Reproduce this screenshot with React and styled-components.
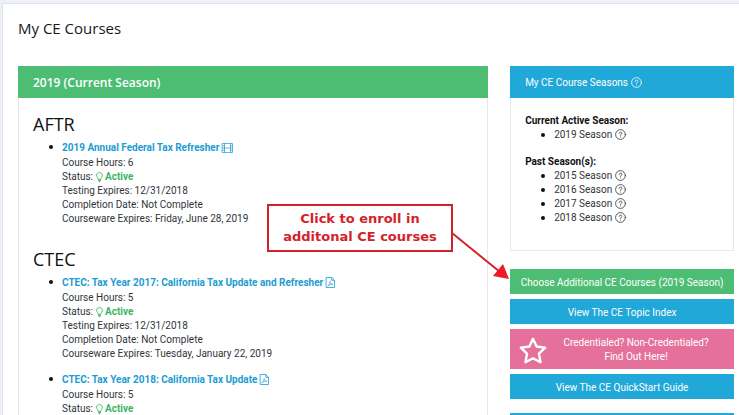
import React from 'react';
import styled, { createGlobalStyle } from 'styled-components';

const GlobalStyle = createGlobalStyle`
    * {
        box-sizing: border-box;
    }
    body {
        margin: 0;
        background: #eef0f7;
        color: #30353a;
        font-family: Roboto, "Open Sans", sans-serif;
        font-size: 10px;
        line-height: 14px;
    }
`

const Page = styled.div`
    position: relative;
    height: 100vh;
    padding: 3px 0 0 2px;
    overflow: hidden;
`

const Content = styled.main`
    min-height: 100%;
    padding: 14px 5px 0 15px;
    background: #fff;
    border-top: 1px solid #dfe3ec;
    border-left: 1px solid #dfe3ec;
`

const PageTitle = styled.h1`
    margin: 0 0 28px;
    color: #16191c;
    font-family: "Open Sans", sans-serif;
    font-size: 15px;
    font-weight: 400;
    line-height: 20px;
`

const Columns = styled.div`
    display: grid;
    grid-template-columns: 21fr 10fr;
    gap: 22px;
`

const Panel = styled.section`
    border: 1px solid #e6e8ea;
    border-top: 0;
`

const PanelHeader = styled.h2`
    display: flex;
    align-items: center;
    gap: 3px;
    height: 32px;
    margin: 0 -1px;
    padding: 2px 15px 0;
    background: ${props => props.$color};
    color: #fff;
    font-family: ${props => (props.$large ? '"Open Sans", sans-serif' : 'inherit')};
    font-size: ${props => (props.$large ? '12px' : '10px')};
    font-weight: ${props => (props.$large ? 600 : 400)};
`

const PanelBody = styled.div`
    padding: 15px 14px 25px;
`

const CourseGroup = styled.div`
    margin-bottom: 22px;
`

const GroupTitle = styled.h3`
    margin: 0 0 4px;
    color: #111;
    font-family: "Open Sans", sans-serif;
    font-size: 18px;
    font-weight: 400;
    line-height: 23px;
`

const CourseList = styled.ul`
    display: grid;
    gap: 11px;
    margin: 0;
    padding: 0 0 0 29px;
    list-style: none;
`

/* dot drawn by hand so it keeps its size next to the small text */
const dot = `
    position: relative;
    &::before {
        content: "";
        position: absolute;
        top: 5px;
        left: -13px;
        width: 4px;
        height: 4px;
        border-radius: 50%;
        background: #111;
    }
`

const Course = styled.li`
    ${dot}
`

const CourseLink = styled.a`
    display: block;
    color: #209cd2;
    font-weight: 700;
    line-height: 16px;
    text-decoration: none;
`

const Status = styled.strong`
    color: #3cb464;
`

const SeasonTitle = styled.h3`
    margin: 0;
    color: #111;
    font-size: 10px;
    font-weight: 700;
    line-height: 15px;
`

const SeasonList = styled.ul`
    margin: 0 0 12px;
    padding: 0 0 0 29px;
    list-style: none;
    &:last-child {
        margin: 0;
    }
`

const Season = styled.li`
    ${dot}
`

const HelpButton = styled.button`
    padding: 0;
    border: 0;
    background: none;
    color: inherit;
    font: inherit;
    vertical-align: top;
    cursor: pointer;
`

const Icon = styled.svg`
    width: ${props => props.$width || 11}px;
    height: ${props => props.$height || 11}px;
    overflow: visible;
    fill: none;
    stroke: currentColor;
    stroke-width: 1;
    stroke-linejoin: round;
    stroke-linecap: round;
    vertical-align: -2px;
`

const Actions = styled.nav`
    display: grid;
    gap: 5px;
    margin-top: 18px;
`

const Action = styled.a`
    display: flex;
    align-items: center;
    min-height: 25px;
    padding: 6px 9px 4px;
    background: ${props => props.$color || '#20a8d8'};
    color: #fff;
    text-align: center;
    text-decoration: none;
    &:last-child {
        margin-top: 9px;
    }
`

const FeatureAction = styled(Action)`
    min-height: 40px;
`

const ActionText = styled.span`
    flex: 1;
`

const Callout = styled.div`
    position: absolute;
    top: 204px;
    left: 267px;
    width: 186px;
    padding: 4px 0;
    background: #fff;
    border: 2px solid #d2232a;
    color: #d2232a;
    font-family: "DejaVu Sans", sans-serif;
    font-size: 13px;
    font-weight: 700;
    line-height: 18px;
    text-align: center;
`

const Arrow = styled.svg`
    position: absolute;
    top: 232px;
    left: 452px;
    width: 58px;
    height: 48px;
`

const HelpIcon = () => (
    <Icon viewBox="0 0 11 11" aria-hidden="true">
        <circle cx="5.5" cy="5.5" r="4.9" strokeWidth="0.8" />
        <path d="M4.1 4.3C4.2 2.6 7 2.7 6.9 4.3C6.8 5.3 5.5 5.3 5.5 6.4M5.5 8V8.1" strokeWidth="0.8" />
    </Icon>
)

const FilmIcon = () => (
    <Icon viewBox="0 0 11 10" $height={10} aria-hidden="true">
        <path d="M.5 .5H10.5V9.5H.5ZM2.5 .5V9.5M8.5 .5V9.5M2.5 5H8.5M.5 2.7H2.5M.5 5H2.5M.5 7.3H2.5M8.5 2.7H10.5M8.5 5H10.5M8.5 7.3H10.5" strokeWidth="0.7" />
    </Icon>
)

const PdfIcon = () => (
    <Icon viewBox="0 0 9 11" $width={9} aria-hidden="true">
        <path d="M.5 .5H5.7L8.5 3.3V10.5H.5ZM5.7 .5V3.3H8.5" strokeWidth="0.8" />
        <path d="M2 8.8C3.2 8.3 4.5 5.8 4.1 4.4C3.5 5.5 5.4 7.5 7 7.4C6 6.8 3.5 7.3 2 8.8Z" strokeWidth="0.6" />
    </Icon>
)

const BulbIcon = () => (
    <Icon viewBox="0 0 7 10" $width={7} $height={10} aria-hidden="true">
        <path d="M2.3 7C2.3 5.6 .6 5 .6 3.2C.6 -.3 6.4 -.3 6.4 3.2C6.4 5 4.7 5.6 4.7 7ZM2.4 8.4H4.6M3 9.6H4" strokeWidth="0.9" />
    </Icon>
)

const StarIcon = () => (
    <Icon viewBox="0 0 28 27" $width={28} $height={27} aria-hidden="true">
        <path d="M14 1.8L17.6 9.5L26.2 10.7L20 16.7L21.5 25.2L14 21.2L6.5 25.2L8 16.7L1.8 10.7L10.4 9.5Z" strokeWidth="2.4" />
    </Icon>
)

const groups = [
    {
        name: 'AFTR',
        courses: [
            {
                title: '2019 Annual Federal Tax Refresher',
                icon: FilmIcon,
                hours: 6,
                details: ['Testing Expires: 12/31/2018', 'Completion Date: Not Complete', 'Courseware Expires: Friday, June 28, 2019'],
            },
        ],
    },
    {
        name: 'CTEC',
        courses: [
            {
                title: 'CTEC: Tax Year 2017: California Tax Update and Refresher',
                icon: PdfIcon,
                hours: 5,
                details: ['Testing Expires: 12/31/2018', 'Completion Date: Not Complete', 'Courseware Expires: Tuesday, January 22, 2019'],
            },
            {
                title: 'CTEC: Tax Year 2018: California Tax Update',
                icon: PdfIcon,
                hours: 5,
                details: [],
            },
        ],
    },
]

const CourseItem = ({ title, icon: TypeIcon, hours, details }) => (
    <Course>
        <CourseLink href="#course">{title} <TypeIcon /></CourseLink>
        <div>Course Hours: {hours}</div>
        <div>Status: <Status><BulbIcon /> Active</Status></div>
        {details.map(line => <div key={line}>{line}</div>)}
    </Course>
)

const Seasons = ({ years }) => (
    <SeasonList>
        {years.map(year => (
            <Season key={year}>
                {year} Season <HelpButton type="button" aria-label={`About the ${year} season`}><HelpIcon /></HelpButton>
            </Season>
        ))}
    </SeasonList>
)

const App = () => {
    return (
        <Page>
            <GlobalStyle />
            <Content>
                <PageTitle>My CE Courses</PageTitle>
                <Columns>
                    <Panel>
                        <PanelHeader $color="#4dbd74" $large>2019 (Current Season)</PanelHeader>
                        <PanelBody>
                            {groups.map(group => (
                                <CourseGroup key={group.name}>
                                    <GroupTitle>{group.name}</GroupTitle>
                                    <CourseList>
                                        {group.courses.map(course => <CourseItem key={course.title} {...course} />)}
                                    </CourseList>
                                </CourseGroup>
                            ))}
                        </PanelBody>
                    </Panel>
                    <aside>
                        <Panel>
                            <PanelHeader $color="#20a8d8">
                                My CE Course Seasons
                                <HelpButton type="button" aria-label="About course seasons"><HelpIcon /></HelpButton>
                            </PanelHeader>
                            <PanelBody>
                                <SeasonTitle>Current Active Season:</SeasonTitle>
                                <Seasons years={[2019]} />
                                <SeasonTitle>Past Season(s):</SeasonTitle>
                                <Seasons years={[2015, 2016, 2017, 2018]} />
                            </PanelBody>
                        </Panel>
                        <Actions>
                            <Action href="#enroll" $color="#4dbd74"><ActionText>Choose Additional CE Courses (2019 Season)</ActionText></Action>
                            <Action href="#topics"><ActionText>View The CE Topic Index</ActionText></Action>
                            <FeatureAction href="#credentials" $color="#e5719b">
                                <StarIcon />
                                <ActionText>Credentialed? Non-Credentialed?<br />Find Out Here!</ActionText>
                            </FeatureAction>
                            <Action href="#quickstart"><ActionText>View The CE QuickStart Guide</ActionText></Action>
                            <Action href="#more" aria-label="More" />
                        </Actions>
                    </aside>
                </Columns>
            </Content>
            <Callout>Click to enroll in<br />additonal CE courses</Callout>
            <Arrow viewBox="0 0 58 48" aria-hidden="true">
                <path d="M0 1L48 40" stroke="#d2232a" strokeWidth="2" />
                <path d="M57 47L41 44L51 32Z" fill="#ec1c24" />
            </Arrow>
        </Page>
    )
}

export default App;
